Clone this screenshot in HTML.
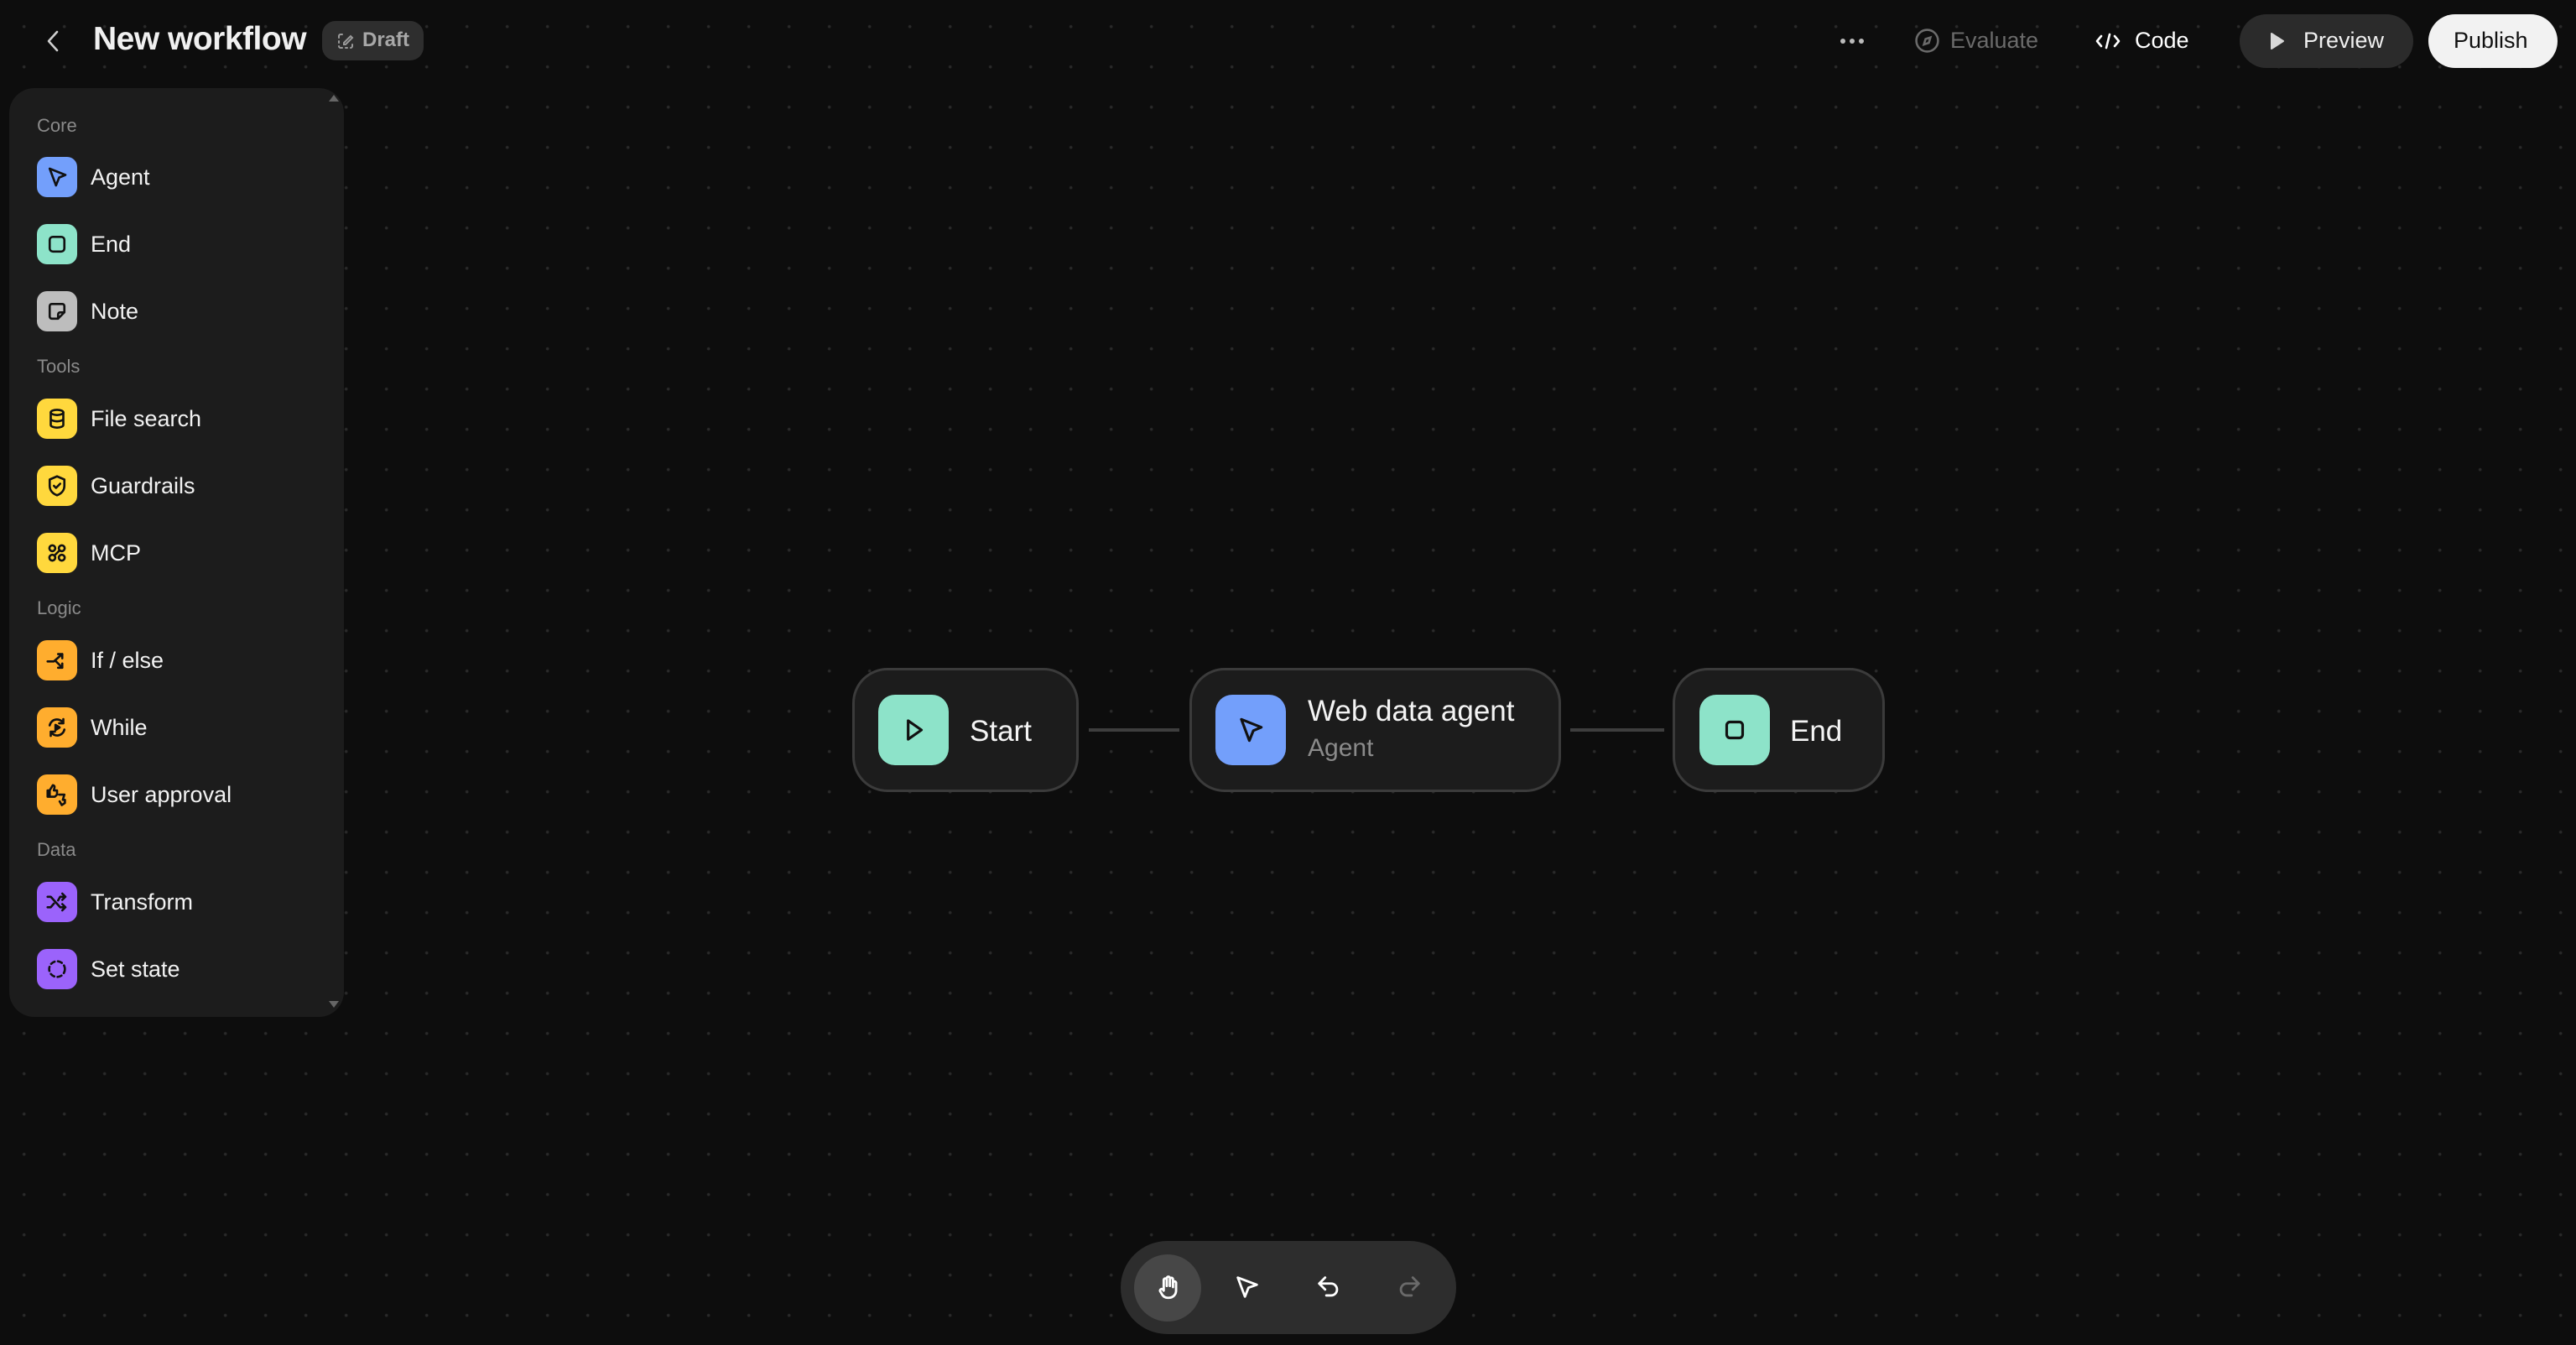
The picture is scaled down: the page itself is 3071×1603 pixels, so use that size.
<!DOCTYPE html>
<html><head><meta charset="utf-8"><style>
*{margin:0;padding:0;box-sizing:border-box}
body{width:3071px;height:1603px;overflow:hidden;background:#0d0d0d;font-family:"Liberation Sans",sans-serif;position:relative;
background-image:radial-gradient(circle at 24px 24px,#2a2a2a 1.5px,transparent 2.1px);background-size:48px 48px;background-position:4.7px 7.7px}
.a{position:absolute}
.side{left:11px;top:105px;width:399px;height:1107px;background:#1c1c1c;border-radius:30px}
.lbl{position:absolute;left:33px;font-size:22px;color:#8a8a8a}
.it{position:absolute;left:33px;height:48px;display:flex;align-items:center;font-size:27px;color:#f2f2f2}
.ic{width:48px;height:48px;border-radius:12px;display:flex;align-items:center;justify-content:center;margin-right:16px}
.ic svg{width:30px;height:30px;fill:none;stroke:#111;stroke-width:2.1;stroke-linecap:round;stroke-linejoin:round}
.node{position:absolute;top:796px;height:148px;background:#1c1c1c;border:3px solid #3b3b3b;border-radius:42px}
.nic{position:absolute;top:29px;width:84px;height:84px;border-radius:20px;display:flex;align-items:center;justify-content:center}
.nic svg{width:38px;height:38px;fill:none;stroke:#111;stroke-width:2;stroke-linecap:round;stroke-linejoin:round}
.nt{position:absolute;color:#f4f4f4;font-size:35px}
.tb svg{position:absolute;width:34px;height:34px;fill:none;stroke:#fff;stroke-width:2;stroke-linecap:round;stroke-linejoin:round}
</style></head><body>
<!-- header -->
<svg class="a" style="left:50px;top:34px" width="26" height="30" viewBox="0 0 26 30"><path d="M18 4L8 15l10 11" fill="none" stroke="#cfcfcf" stroke-width="2.6" stroke-linecap="round" stroke-linejoin="round"/></svg>
<div class="a" style="left:111px;top:25px;font-size:39px;font-weight:bold;color:#f0f0f0;letter-spacing:-0.5px">New workflow</div>
<div class="a" style="left:384px;top:25px;width:121px;height:47px;background:#2e2e2e;border-radius:16px"></div>
<svg class="a" style="left:400px;top:37px" width="24" height="24" viewBox="0 0 24 24" fill="none" stroke="#9a9a9a" stroke-width="2" stroke-linecap="round"><path d="M4 8v-2a2 2 0 0 1 2-2h2M4 12v2M4 18a2 2 0 0 0 2 2h2M12 20h2M18 20a2 2 0 0 0 2-2v-2M10 14l8-8 2 2-8 8h-2z"/></svg>
<div class="a" style="left:432px;top:34px;font-size:24px;color:#a8a8a8;font-weight:bold">Draft</div>

<div class="a" style="left:2194px;top:46px;width:6px;height:6px;border-radius:3px;background:#bbb;box-shadow:11px 0 #bbb,22px 0 #bbb"></div>
<svg class="a" style="left:2282px;top:33px" width="31" height="31" viewBox="0 0 24 24" fill="none" stroke="#6a6a6a" stroke-width="2"><circle cx="12" cy="12" r="10"/><path d="M15 9l-1.5 5L9 15.5l1.5-5z"/></svg>
<div class="a" style="left:2325px;top:33px;font-size:27px;color:#6a6a6a">Evaluate</div>
<svg class="a" style="left:2497px;top:37px" width="32" height="24" viewBox="0 0 32 24" fill="none" stroke="#fff" stroke-width="2.6" stroke-linecap="round" stroke-linejoin="round"><path d="M8 6l-5 6 5 6M24 6l5 6-5 6M18 4l-4 16"/></svg>
<div class="a" style="left:2545px;top:33px;font-size:27px;color:#fff">Code</div>
<div class="a" style="left:2670px;top:17px;width:207px;height:64px;background:#2b2b2b;border-radius:32px"></div>
<svg class="a" style="left:2705px;top:37px" width="20" height="24" viewBox="0 0 20 24"><path d="M3 3l14 9-14 9z" fill="#d8d8d8" stroke="#d8d8d8" stroke-width="2" stroke-linejoin="round"/></svg>
<div class="a" style="left:2746px;top:33px;font-size:27px;color:#f0f0f0">Preview</div>
<div class="a" style="left:2895px;top:17px;width:154px;height:64px;background:#f2f2f2;border-radius:32px"></div>
<div class="a" style="left:2925px;top:33px;font-size:27px;color:#111">Publish</div>

<!-- sidebar -->
<div class="a side"></div>
<svg class="a" style="left:390px;top:110px" width="16" height="12"><path d="M2 11L8 3l6 8z" fill="#666"/></svg>
<svg class="a" style="left:390px;top:1192px" width="16" height="12"><path d="M2 1l6 8 6-8z" fill="#666"/></svg>
<div class="lbl" style="left:44px;top:137px">Core</div>
<div class="it" style="left:44px;top:187px"><div class="ic" style="background:#739ffb"><svg viewBox="0 0 24 24"><path d="M5 4l15 6-6 2.5-3 7.5z"/></svg></div>Agent</div>
<div class="it" style="left:44px;top:267px"><div class="ic" style="background:#8de3c9"><svg viewBox="0 0 24 24"><rect x="5" y="5" width="14" height="14" rx="3"/></svg></div>End</div>
<div class="it" style="left:44px;top:347px"><div class="ic" style="background:#bdbdbd"><svg viewBox="0 0 24 24"><path d="M19 13V7a2 2 0 0 0-2-2H7a2 2 0 0 0-2 2v10a2 2 0 0 0 2 2h6zM13 19v-4a2 2 0 0 1 2-2h4"/></svg></div>Note</div>
<div class="lbl" style="left:44px;top:424px">Tools</div>
<div class="it" style="left:44px;top:475px"><div class="ic" style="background:#ffd83d"><svg viewBox="0 0 24 24"><ellipse cx="12" cy="6" rx="6" ry="2.5"/><path d="M6 6v12c0 1.4 2.7 2.5 6 2.5s6-1.1 6-2.5V6M6 12c0 1.4 2.7 2.5 6 2.5s6-1.1 6-2.5"/></svg></div>File search</div>
<div class="it" style="left:44px;top:555px"><div class="ic" style="background:#ffd83d"><svg viewBox="0 0 24 24"><path d="M12 3l7 3v6c0 4.5-3 7.5-7 9-4-1.5-7-4.5-7-9V6z"/><path d="M9 12l2 2 4-4"/></svg></div>Guardrails</div>
<div class="it" style="left:44px;top:635px"><div class="ic" style="background:#ffd83d"><svg viewBox="0 0 24 24"><circle cx="7.5" cy="7.5" r="2.8"/><circle cx="16.5" cy="7.5" r="2.8"/><circle cx="7.5" cy="16.5" r="2.8"/><circle cx="16.5" cy="16.5" r="2.8"/><path d="M14.5 9.5l-5 5"/></svg></div>MCP</div>
<div class="lbl" style="left:44px;top:712px">Logic</div>
<div class="it" style="left:44px;top:763px"><div class="ic" style="background:#ffad2e"><svg viewBox="0 0 24 24"><path d="M3 13h6l8-7M13 6h4v4M11 13l6 6M17 15v4h-4"/></svg></div>If / else</div>
<div class="it" style="left:44px;top:843px"><div class="ic" style="background:#ffad2e"><svg viewBox="0 0 24 24"><path d="M5 10a7 7 0 0 1 13-2M19 14a7 7 0 0 1-13 2M18 4v4h-4M6 20v-4h4"/><path d="M10.5 9.5l4 2.5-4 2.5z" fill="#111"/></svg></div>While</div>
<div class="it" style="left:44px;top:923px"><div class="ic" style="background:#ffad2e"><svg viewBox="0 0 24 24"><path d="M3 8h2v6H3zM5 8l3-5c1 0 2 1 1.5 2.5L9 8h3v4l-2 2H5M14 12h5l-1.5 5h2v3l-3 2-2-3.5"/></svg></div>User approval</div>
<div class="lbl" style="left:44px;top:1000px">Data</div>
<div class="it" style="left:44px;top:1051px"><div class="ic" style="background:#9b63fb"><svg viewBox="0 0 24 24"><path d="M3 7h3l9 10h5M3 17h3l3-3.5M13 10.5L15 7h5M17 4l3 3-3 3M17 14l3 3-3 3"/></svg></div>Transform</div>
<div class="it" style="left:44px;top:1131px"><div class="ic" style="background:#9b63fb"><svg viewBox="0 0 24 24"><circle cx="12" cy="12" r="7.5" stroke-dasharray="4 3.2"/></svg></div>Set state</div>

<!-- edges -->
<div class="a" style="left:1298px;top:868px;width:108px;height:4px;background:#3e3e3e"></div>
<div class="a" style="left:1872px;top:868px;width:112px;height:4px;background:#3e3e3e"></div>
<!-- nodes -->
<div class="node" style="left:1016px;width:270px"><div class="nic" style="left:28px;background:#8de3c9"><svg viewBox="0 0 24 24"><path d="M8 5l10 7-10 7z"/></svg></div><div class="nt" style="left:137px;top:53px">Start</div></div>
<div class="node" style="left:1418px;width:443px"><div class="nic" style="left:28px;background:#739ffb"><svg viewBox="0 0 24 24"><path d="M5 4l15 6-6 2.5-3 7.5z"/></svg></div><div class="nt" style="left:138px;top:29px">Web data agent</div><div class="nt" style="left:138px;top:76px;color:#8a8a8a;font-size:30px">Agent</div></div>
<div class="node" style="left:1994px;width:253px"><div class="nic" style="left:29px;background:#8de3c9"><svg viewBox="0 0 24 24"><rect x="6" y="6" width="12" height="12" rx="2.5"/></svg></div><div class="nt" style="left:137px;top:53px">End</div></div>

<!-- toolbar -->
<div class="a tb" style="left:1336px;top:1479px;width:400px;height:111px;background:#2d2d2d;border-radius:56px">
<div class="a" style="left:16px;top:16px;width:80px;height:80px;border-radius:40px;background:#474747"></div>
<svg viewBox="0 0 24 24" style="left:40px;top:38px"><path d="M8 12V6a1.3 1.3 0 0 1 2.6 0v5M10.6 11V4.5a1.3 1.3 0 0 1 2.6 0V11M13.2 11V5.5a1.3 1.3 0 0 1 2.6 0V12M15.8 12V8.5a1.3 1.3 0 0 1 2.6 0V15a6 6 0 0 1-6 6h-1a5.5 5.5 0 0 1-4.6-2.5L5 15.5a1.4 1.4 0 0 1 2.2-1.6L8 15V12"/></svg>
<svg viewBox="0 0 24 24" style="left:134px;top:38px"><path d="M4 4l16 6-7 2.5-3 7.5z"/></svg>
<svg viewBox="0 0 24 24" style="left:231px;top:38px"><path d="M9 4L4 9l5 5M4 9h10a5 5 0 0 1 0 10h-4"/></svg>
<svg viewBox="0 0 24 24" style="left:327px;top:38px;stroke:#6a6a6a"><path d="M15 4l5 5-5 5M20 9H10a5 5 0 0 0 0 10h4"/></svg>
</div>
</body></html>
